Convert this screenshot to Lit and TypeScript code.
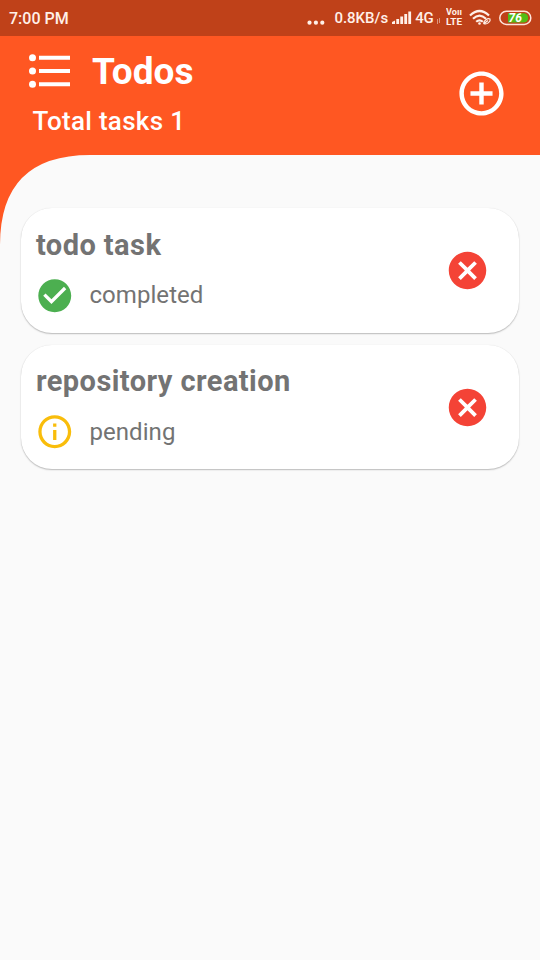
import { LitElement, html, css, svg } from "lit";
import { customElement, property } from "lit/decorators.js";

@customElement("status-bar")
class StatusBar extends LitElement {
  static styles = css`
    :host { display: flex; align-items: center; height: 36px; box-sizing: border-box; padding: 0 8px 0 9px; background: #bf4119; color: #fff0e8; font: 500 16px/37px Roboto, sans-serif; }
    .time { flex: 1; }
    .rate { font-size: 15px; letter-spacing: 0; margin-left: 9.500px; }
    .signal { margin-left: 4px; }
    .net { font-size: 15px; margin-left: 3px; letter-spacing: -0.200px; }
    .volte { display: block; margin-left: 5px; }
    .volte text { font: 700 9px Roboto, sans-serif; fill: #fff0e8; }
    .volte .voice { font-size: 8.500px; }
    .arrows { margin-left: 2px; }
    .wifi { margin-left: 6.500px; }
    .battery { margin-left: 6px; }
    svg { display: block; flex: none; }
    .level { font: italic 700 12px Roboto, sans-serif; }
  `;
  render() {
    return html`
      <span class="time">7:00 PM</span>
      <svg width="18" height="36" fill="#fff0e8"><circle cx="2.500" cy="22.700" r="2.100"/><circle cx="8.900" cy="22.700" r="2.100"/><circle cx="15.300" cy="22.700" r="2.100"/></svg>
      <span class="rate">0.8KB/s</span>
      <svg class="signal" width="20" height="36" fill="#fff0e8"><path d="M0 22l3-1.500V24H0zM4.300 19h2.800v5H4.300zM8.300 16.500h2.800V24H8.300zM12.300 14h2.800v10h-2.800zM16.300 11.500h2.800V24h-2.800z"/></svg>
      <span class="net">4G</span>
      <svg class="arrows" width="5" height="36" fill="none" stroke="#dc977f" stroke-width="1"><path d="M1.500 24v-5M3.500 18v5"/></svg>
      <svg class="volte" width="17" height="36"><text class="voice" x="0" y="15" textLength="16" lengthAdjust="spacingAndGlyphs">Voıı</text><text x="0" y="25.200" textLength="16" lengthAdjust="spacingAndGlyphs">LTE</text></svg>
      <svg class="wifi" width="24" height="36" fill="none" stroke="#fff0e8" stroke-width="2.200"><path d="M1 15.500Q10.500 6.500 20 15.500M4 18.800Q10.500 12.500 17 18.800M7.200 21.800Q10.500 18.800 13.800 21.800"/><circle cx="10.500" cy="23.500" r="1.300" fill="#fff0e8" stroke="none"/><path stroke-width="1.200" d="M15 23.700c-1-2.200 3.500-6 6-4.700 1 2.200-3 6-6 4.700l4-3.200"/></svg>
      <svg class="battery" width="33" height="36"><rect x=".8" y="11.300" width="31" height="13.200" rx="6.600" fill="none" stroke="#ffe3da" stroke-width="1.500"/><path d="M9 13.200h15.500a4.700 4.700 0 0 1 0 9.400H9z" fill="#53bd16"/><text class="level" x="9.500" y="22.200" fill="#fff">76</text></svg>
    `;
  }
}

@customElement("todo-card")
class TodoCard extends LitElement {
  @property() declare label: string;
  @property() declare status: string;
  static styles = css`
    :host { display: flex; align-items: center; justify-content: space-between; box-sizing: border-box; height: 124.500px; padding: 0 29px 0 15px; border-radius: 31px; background: #fff; color: #737373; box-shadow: 0 1px 1.500px rgba(0,0,0,.25), 0 0 1px rgba(0,0,0,.1); font-family: Roboto, sans-serif; }
    .text { display: flex; flex-direction: column; align-self: flex-start; padding-top: 18.300px; }
    .title { font-size: 29px; font-weight: 700; line-height: 36px; letter-spacing: 0.430px; white-space: nowrap; }
    .state { display: flex; align-items: center; gap: 14.700px; margin: 12.900px 0 0 -0.700px; height: 40px; font-size: 24px; letter-spacing: 0.050px; }
    svg { display: block; }
  `;
  render() {
    const done = this.status === "completed";
    return html`
      <div class="text">
        <div class="title">${this.label}</div>
        <div class="state">
          <svg width="39.500" height="39.500" viewBox="0 0 24 24" fill=${done ? "#4caf50" : "#f9bd0b"}>
            ${done
              ? svg`<path d="M12 2C6.480 2 2 6.480 2 12s4.480 10 10 10 10-4.480 10-10S17.520 2 12 2zm-2 15-5-5 1.410-1.410L10 14.170l7.590-7.590L19 8l-9 9z"/>`
              : svg`<path d="M11 7h2v2h-2zm0 4h2v6h-2zm1-9C6.480 2 2 6.480 2 12s4.480 10 10 10 10-4.480 10-10S17.520 2 12 2zm0 18c-4.410 0-8-3.590-8-8s3.590-8 8-8 8 3.590 8 8-3.590 8-8 8z"/>`}
          </svg>
          <span>${this.status}</span>
        </div>
      </div>
      <svg width="45" height="45" viewBox="0 0 24 24" fill="#f44336"><path d="M12 2C6.470 2 2 6.470 2 12s4.470 10 10 10 10-4.470 10-10S17.530 2 12 2zm5 13.590L15.590 17 12 13.410 8.410 17 7 15.590 10.590 12 7 8.410 8.410 7 12 10.590 15.590 7 17 8.410 13.410 12 17 15.590z"/></svg>
    `;
  }
}

@customElement("app-root")
class AppRoot extends LitElement {
  static styles = css`
    :host { display: flex; flex-direction: column; height: 960px; overflow: hidden; background: #ff5722; font-family: Roboto, sans-serif; }
    header { display: flex; justify-content: space-between; height: 118.500px; flex: none; box-sizing: border-box; padding: 14px 32px 0 29px; color: #fff; }
    .brand { display: flex; gap: 21px; align-items: center; height: 42px; }
    h1 { margin: 2px 0 0; font-size: 37px; line-height: 42px; font-weight: 700; }
    .total { margin: 13px 0 0 3.500px; font-size: 26px; line-height: 32px; font-weight: 500; letter-spacing: 0.300px; }
    .add { margin-top: 16.500px; margin-right: -0.300px; }
    svg { display: block; }
    main { position: relative; flex: 1; display: flex; flex-direction: column; gap: 12px; background: #fafafa; padding: 53.800px 21px 0; }
    .curve { position: absolute; left: 0; top: 0; }
  `;
  render() {
    return html`
      <status-bar></status-bar>
      <header>
        <div>
          <div class="brand">
            <svg width="42" height="42" fill="#fff"><circle cx="3.500" cy="7.800" r="3.500"/><circle cx="3.500" cy="21" r="3.500"/><circle cx="3.500" cy="34.200" r="3.500"/><path d="M10 5.800h31v4H10zM10 19h31v4H10zM10 32.200h31v4H10z"/></svg>
            <h1>Todos</h1>
          </div>
          <div class="total">Total tasks 1</div>
        </div>
        <svg class="add" width="53" height="53" viewBox="0 0 24 24" fill="#fff"><path d="M13 7h-2v4H7v2h4v4h2v-4h4v-2h-4V7zm-1-5C6.480 2 2 6.480 2 12s4.480 10 10 10 10-4.480 10-10S17.520 2 12 2zm0 18c-4.410 0-8-3.590-8-8s3.590-8 8-8 8 3.590 8 8-3.590 8-8 8z"/></svg>
      </header>
      <main>
        <svg class="curve" width="90" height="90" fill="#ff5722"><path d="M0 0H90Q0 0 0 90Z"/></svg>
        <todo-card label="todo task" status="completed"></todo-card>
        <todo-card label="repository creation" status="pending"></todo-card>
      </main>
    `;
  }
}
